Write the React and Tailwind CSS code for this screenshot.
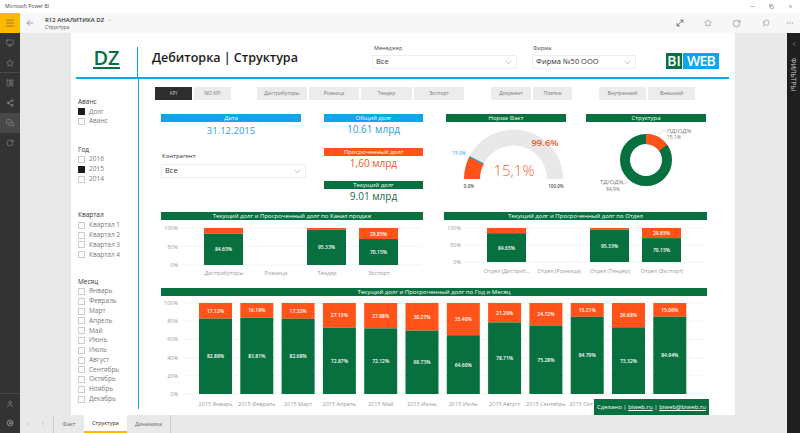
import { ArrowLeft, ChevronDown, ChevronLeft, ChevronRight, Cog, Copy, Ellipsis, LayoutPanelLeft, Menu, MessagesSquare, Minus, Monitor, MoveDiagonal, RotateCw, Search, Share2, Star, User, X } from 'lucide-react';

const BLUE = '#0aa7ea';
const GREEN = '#08703f';
const ORANGE = '#ff5319';

const kanal = [
  { x: 43, green: 84.65, label: 'Дистрибуторы', cx: 63, showOrange: false },
  { label: 'Розница', cx: 115 },
  { x: 146, green: 95.33, label: 'Тендер', cx: 166, showOrange: false },
  { x: 198, green: 70.15, label: 'Экспорт', cx: 218, showOrange: true },
];

const otdel = [
  { x: 43, green: 84.65, label: 'Отдел (Дистриб...', cx: 63, showOrange: false },
  { label: 'Отдел (Розница)', cx: 115 },
  { x: 146, green: 95.33, label: 'Отдел (Тендер)', cx: 166, showOrange: false },
  { x: 198, green: 70.15, label: 'Отдел (Экспорт)', cx: 218, showOrange: true },
];

const mesyacy = [
  ['Январь', 82.88, 17.12],
  ['Февраль', 83.81, 16.19],
  ['Март', 82.68, 17.32],
  ['Апрель', 72.87, 27.13],
  ['Май', 72.12, 27.88],
  ['Июнь', 69.73, 30.27],
  ['Июль', 64.6, 35.4],
  ['Август', 78.71, 21.29],
  ['Сентябрь', 75.28, 24.72],
  ['Окт', 84.79, 15.21],
  ['Ноябрь', 73.32, 26.68],
  ['Декабрь', 84.94, 15.06],
].map(([m, g, o], i) => ({
  x: 38 + i * 41.3,
  green: g,
  orange: o,
  label: `2015 ${m}`,
  // подписи двух последних месяцев закрыты плашкой, октябрь виден наполовину
  hideLabel: i > 9,
  cx: i === 9 ? 420 : 54.5 + i * 41.3,
  showOrange: true,
}));

const pct = (v) => `${v.toFixed(2)}%`;

function Header({ children, color = GREEN, className = '' }) {
  return (
    <div className={`h-2 flex items-center justify-center text-[6px] leading-none text-white ${className}`} style={{ backgroundColor: color }}>
      {children}
    </div>
  );
}

function Chart({ width, height, top, bottom, ticks, gridFrom, gridTo, barWidth, labelY, bars }) {
  const span = bottom - top;
  return (
    <svg width={width} height={height} className="block">
      {ticks.map((t) => {
        const y = bottom - (span * t) / 100;
        return (
          <g key={t}>
            <line x1={gridFrom} x2={gridTo} y1={y} y2={y} stroke="#efefef" strokeWidth="0.7" />
            <text x="17" y={y + 2} textAnchor="end" fontSize="5.5" fill="#999">{t}%</text>
          </g>
        );
      })}
      {bars.map((b) => {
        const orange = b.orange ?? 100 - b.green;
        return (
          <g key={b.label}>
            {b.x !== undefined && (
              <>
                <rect x={b.x} y={top} width={barWidth} height={(span * orange) / 100} fill={ORANGE} />
                <rect x={b.x} y={bottom - (span * b.green) / 100} width={barWidth} height={(span * b.green) / 100} fill={GREEN} />
                <text x={b.x + barWidth / 2} y={bottom - (span * b.green) / 200 + 2} textAnchor="middle" fontSize="5" fontWeight="600" fill="#fff">{pct(b.green)}</text>
                {b.showOrange && (
                  <text x={b.x + barWidth / 2} y={top + (span * orange) / 200 + 2} textAnchor="middle" fontSize="5" fontWeight="600" fill="#fff">{pct(orange)}</text>
                )}
              </>
            )}
            {!b.hideLabel && (
              <text x={b.cx} y={labelY} textAnchor="middle" fontSize="5.5" fill="#999">{b.label}</text>
            )}
          </g>
        );
      })}
    </svg>
  );
}

function Gauge() {
  const cx = 67.5;
  const cy = 57;
  const R = 49.5;
  const r = 33.5;
  const point = (rad, f) => {
    const a = Math.PI * (1 - f);
    return `${(cx + rad * Math.cos(a)).toFixed(2)} ${(cy - rad * Math.sin(a)).toFixed(2)}`;
  };
  const arc = (f) => `M${point(R, 0)} A${R} ${R} 0 0 1 ${point(R, f)} L${point(r, f)} A${r} ${r} 0 0 0 ${point(r, 0)} Z`;
  return (
    <svg width="120" height="72" className="block">
      <path d={arc(1)} fill="#e8e8e8" />
      <path d={arc(0.151)} fill={ORANGE} />
      <line
        x1={cx + r * Math.cos(Math.PI * 0.85)}
        y1={cy - r * Math.sin(Math.PI * 0.85)}
        x2={cx + R * Math.cos(Math.PI * 0.85)}
        y2={cy - R * Math.sin(Math.PI * 0.85)}
        stroke={BLUE}
        strokeWidth="1"
      />
      <text x="13" y="33" textAnchor="middle" fontSize="5" fill={BLUE}>15.0%</text>
      <text x="99" y="24" textAnchor="middle" fontSize="9.5" fontWeight="600" fill="#f4582a">99.6%</text>
      <text x="68" y="54" textAnchor="middle" fontSize="15" fontWeight="300" fill="#f0673c">15,1%</text>
      <text x="23" y="66" textAnchor="middle" fontSize="4.5" fontWeight="600" fill="#555">0.0%</text>
      <text x="110" y="66" textAnchor="middle" fontSize="4.5" fontWeight="600" fill="#555">100.0%</text>
    </svg>
  );
}

function Donut() {
  const cx = 60;
  const cy = 38;
  const R = 26;
  const r = 16;
  const a = 0.151 * 2 * Math.PI;
  const wedge = `M${cx} ${cy - R} A${R} ${R} 0 0 1 ${cx + R * Math.sin(a)} ${cy - R * Math.cos(a)} L${cx + r * Math.sin(a)} ${cy - r * Math.cos(a)} A${r} ${r} 0 0 0 ${cx} ${cy - r} Z`;
  return (
    <svg width="120" height="72" className="block">
      <circle cx={cx} cy={cy} r={(R + r) / 2} fill="none" stroke={GREEN} strokeWidth={R - r} />
      <path d={wedge} fill={ORANGE} />
      <path d="M72 13 L76 9 L80 9" fill="none" stroke="#bbb" strokeWidth="0.5" />
      <path d="M42 60 L38 62 L34 62" fill="none" stroke="#bbb" strokeWidth="0.5" />
      <text x="81" y="11" fontSize="6" fill="#777">ПД/ОД%</text>
      <text x="81" y="17" fontSize="5" fill="#777">15,1%</text>
      <text x="14" y="62" fontSize="6" fill="#777">ТД/ОД%</text>
      <text x="20" y="69" fontSize="5" fill="#777">84,9%</text>
    </svg>
  );
}

function Slicer({ title, items, checked, className = '' }) {
  return (
    <div className={className}>
      <div className="text-[6.5px] leading-[11px] text-[#333]">{title}</div>
      {items.map((item) => (
        <div key={item} className="flex items-center h-[9.8px] gap-[4px]">
          <span className={`w-[7px] h-[7px] border ${item === checked ? 'bg-[#1c1c1c] border-[#1c1c1c]' : 'border-[#ccc]'}`} />
          <span className="text-[6.5px] leading-none text-[#7a7a7a]">{item}</span>
        </div>
      ))}
    </div>
  );
}

function Dropdown({ value, className = '' }) {
  return (
    <div className={`h-[14px] border border-[#eee] flex items-center justify-between px-[3px] ${className}`}>
      <span className="text-[7.5px] leading-none text-[#333]">{value}</span>
      <ChevronDown size={9} strokeWidth={1} className="text-[#555]" />
    </div>
  );
}

function Btn({ children, active, w }) {
  return (
    <div
      className={`h-[13px] flex items-center justify-center text-[5px] leading-none ${active ? 'bg-[#2d2d2d] text-[#ccc]' : 'bg-[#ececec] text-[#777]'}`}
      style={{ width: w }}
    >
      {children}
    </div>
  );
}

function Kpi({ title, value, color, valueColor, className = '' }) {
  return (
    <div className={className}>
      <Header color={color}>{title}</Header>
      <div className="text-[10px] leading-[13px] text-center mt-[1px]" style={{ color: valueColor }}>{value}</div>
    </div>
  );
}

export default function App() {
  return (
    <div className="w-[800px] h-[433px] flex flex-col overflow-hidden bg-white font-['Open_Sans',sans-serif]">
      <div className="h-[13px] flex items-center justify-between pl-[5px] pr-[7px] text-[5px] text-[#444]">
        <span>Microsoft Power BI</span>
        <div className="flex items-center gap-[14px] text-[#555]">
          <Minus size={5} />
          <Copy size={5} />
          <X size={5} />
        </div>
      </div>

      <div className="flex-1 flex min-h-0">
        {/* Левая панель */}
        <div className="w-5 bg-[#333] flex flex-col text-[#bbb]">
          <div className="h-5 bg-[#fdb900] flex items-center justify-center text-[#555]">
            <Menu size={10} strokeWidth={1.5} />
          </div>
          <div className="h-5 flex items-center justify-center"><Monitor size={8} strokeWidth={1.2} /></div>
          <div className="h-5 flex items-center justify-center border-b border-[#4a4a4a]"><Star size={8} strokeWidth={1.2} /></div>
          <div className="h-5 flex items-center justify-center"><LayoutPanelLeft size={8} strokeWidth={1.2} /></div>
          <div className="h-5 flex items-center justify-center"><Share2 size={8} strokeWidth={1.2} /></div>
          <div className="h-5 flex items-center justify-center bg-[#484848]"><MessagesSquare size={8} strokeWidth={1.2} /></div>
          <div className="h-5 flex items-center justify-center"><RotateCw size={8} strokeWidth={1.2} /></div>
          <div className="mt-auto h-5 flex items-center justify-center border-t border-[#4a4a4a]"><User size={8} strokeWidth={1.2} /></div>
          <div className="h-5 flex items-center justify-center"><Cog size={8} strokeWidth={1.2} /></div>
        </div>

        <div className="flex-1 flex flex-col min-w-0">
          {/* Панель приложения */}
          <div className="h-5 bg-[#f7f7f7] flex items-center text-[#333]">
            <ArrowLeft size={10} strokeWidth={1} className="ml-[5px]" />
            <div className="ml-[10px] flex flex-col">
              <div className="flex items-center gap-[3px] text-[6px] leading-[8px] font-semibold text-[#333]">
                R12 АНАЛИТИКА DZ <ChevronDown size={5} className="text-[#777]" />
              </div>
              <div className="text-[5px] leading-[6px] text-[#555]">Структура</div>
            </div>
            <div className="ml-auto flex items-center pr-[6px]">
              <MoveDiagonal size={10} strokeWidth={1.3} className="text-[#222]" />
              <Star size={8} strokeWidth={1} className="ml-[19px]" />
              <RotateCw size={9} strokeWidth={1} className="ml-5" />
              <Search size={8} strokeWidth={1} className="ml-[21px] -scale-x-100" />
              <Ellipsis size={8} strokeWidth={1} className="ml-4 text-[#777]" />
            </div>
          </div>

          <div className="flex-1 flex min-h-0">
            <div className="flex-1 flex flex-col min-w-0 bg-[#e9e9e9]">
              <div className="h-[382px] pl-[51px]">
                {/* Отчёт */}
                <div className="relative w-[664px] h-[382px] bg-white flex flex-col">
                  <div className="h-[46px] ml-[5px] mr-[6px] flex border-b-2 border-[#0aa7ea]">
                    <div className="w-[62px] h-[30px] mt-[14px] border-r-[1.5px] border-[#0aa7ea] flex justify-center pt-[1px]">
                      <span className="text-[20px] leading-[20px] h-[21px] font-semibold text-[#08703f] border-b-2 border-[#08703f]">DZ</span>
                    </div>
                    <div className="w-[234px] pl-[14px] pt-[16px] text-[12.5px] leading-[18px] font-semibold text-[#1a1a1a] whitespace-nowrap">
                      Дебиторка | Структура
                    </div>
                    <div className="w-[145px] pt-[11px]">
                      <div className="text-[5.5px] leading-[8px] pl-[2px] text-[#444]">Менеджер</div>
                      <Dropdown value="Все" className="mt-[3px]" />
                    </div>
                    <div className="ml-[15px] w-[104px] pt-[11px]">
                      <div className="text-[5.5px] leading-[8px] pl-[1px] text-[#444]">Фирма</div>
                      <Dropdown value="Фирма №50 ООО" className="mt-[3px]" />
                    </div>
                    <div className="ml-[30px] mt-[20px] flex h-4 text-[14px] leading-4 font-semibold text-white">
                      <span className="w-4 bg-[#08703f] text-center">BI</span>
                      <span className="w-9 ml-px bg-[#0aa7ea] text-center tracking-tighter">WEB</span>
                    </div>
                  </div>

                  <div className="flex-1 flex min-h-0">
                    {/* Фильтры */}
                    <div className="w-[68px] h-[330px] pl-[7px] pt-[17px] border-r-[1.5px] border-[#0aa7ea]">
                      <Slicer title="Аванс" items={['Долг', 'Аванс']} checked="Долг" />
                      <Slicer title="Год" items={['2016', '2015', '2014']} checked="2015" className="mt-[17px]" />
                      <Slicer title="Квартал" items={['Квартал 1', 'Квартал 2', 'Квартал 3', 'Квартал 4']} className="mt-[25.5px]" />
                      <Slicer title="Месяц" items={['Январь', 'Февраль', 'Март', 'Апрель', 'Май', 'Июнь', 'Июль', 'Август', 'Сентябрь', 'Октябрь', 'Ноябрь', 'Декабрь']} className="mt-[16px]" />
                    </div>

                    <div className="flex-1 min-w-0">
                      {/* Кнопки */}
                      <div className="flex mt-2 ml-4">
                        <div className="flex gap-[2px]">
                          <Btn active w={37}>KPI</Btn>
                          <Btn w={37}>NO KPI</Btn>
                        </div>
                        <div className="flex gap-[2px] ml-[26px]">
                          <Btn w={50}>Дистрибуторы</Btn>
                          <Btn w={50}>Розница</Btn>
                          <Btn w={51}>Тендер</Btn>
                          <Btn w={50}>Экспорт</Btn>
                        </div>
                        <div className="flex gap-[2px] ml-[27px]">
                          <Btn w={40}>Документ</Btn>
                          <Btn w={39}>Платеж</Btn>
                        </div>
                        <div className="flex gap-[2px] ml-[27px]">
                          <Btn w={47}>Внутренний</Btn>
                          <Btn w={47}>Внешний</Btn>
                        </div>
                      </div>

                      {/* Показатели */}
                      <div className="flex mt-[14px] ml-[22px] h-[98px]">
                        <div className="w-[145px]">
                          <Header color={BLUE} className="w-[140px]">Дата</Header>
                          <div className="w-[140px] text-[9.5px] leading-[13px] mt-[2px] text-center text-[#1f9fdc]">31.12.2015</div>
                          <div className="text-[6px] leading-[8px] mt-[15px] pl-[1px] text-[#333]">Контрагент</div>
                          <Dropdown value="Все" className="mt-[4px]" />
                        </div>
                        <div className="w-[99px] ml-[18px]">
                          <Kpi title="Общий долг" value="10.61 млрд" color={BLUE} valueColor="#1f9fdc" />
                          <Kpi title="Просроченный долг" value="1,60 млрд" color={ORANGE} valueColor="#f0582a" className="mt-[12px]" />
                          <Kpi title="Текущий долг" value="9.01 млрд" color={GREEN} valueColor="#18693f" className="mt-[11px]" />
                        </div>
                        <div className="w-[120px] ml-[23px]">
                          <Header>Норма Факт</Header>
                          <Gauge />
                        </div>
                        <div className="w-[120px] ml-5">
                          <Header>Структура</Header>
                          <Donut />
                        </div>
                      </div>

                      {/* Графики */}
                      <div className="flex ml-[22px]">
                        <div className="w-[262px]">
                          <Header>Текущий долг и Просроченный долг по Канал продаж</Header>
                          <Chart width={262} height={68} top={8} bottom={45} ticks={[100, 50, 0]} gridFrom={20} gridTo={260} barWidth={39} labelY={55} bars={kanal} />
                        </div>
                        <div className="w-[263px] ml-[21px]">
                          <Header>Текущий долг и Просроченный долг по Отдел</Header>
                          <Chart width={263} height={68} top={8} bottom={42} ticks={[100, 50, 0]} gridFrom={20} gridTo={260} barWidth={39} labelY={53} bars={otdel} />
                        </div>
                      </div>

                      <div className="ml-[22px] w-[546px]">
                        <Header>Текущий долг и Просроченный долг по Год и Месяц</Header>
                        <Chart width={546} height={118} top={7} bottom={98} ticks={[100, 80, 60, 40, 20, 0]} gridFrom={22} gridTo={543} barWidth={33} labelY={110} bars={mesyacy} />
                      </div>
                    </div>
                  </div>

                  <div className="absolute right-[26px] bottom-0 w-[115px] h-4 bg-[#08703f] flex items-center justify-center text-[6px] leading-none text-white whitespace-nowrap">
                    Сделано |&nbsp;<span className="underline">biweb.ru</span>&nbsp;|&nbsp;<span className="underline">biweb@biweb.ru</span>
                  </div>
                </div>
              </div>

              {/* Вкладки */}
              <div className="flex-1 flex items-stretch text-[5.5px] text-[#666]">
                <div className="w-[34px] flex items-center gap-[9px] pl-[5px] text-[#aaa] border-r border-[#ccc]">
                  <ChevronLeft size={6} />
                  <ChevronRight size={6} />
                </div>
                <div className="w-[30px] flex items-center justify-center">Факт</div>
                <div className="w-[43px] flex items-center justify-center bg-white border-b-2 border-[#fdb900] text-[#222]">Структура</div>
                <div className="w-[44px] flex items-center justify-center border-r border-[#ccc]">Динамика</div>
              </div>
            </div>

            {/* Панель фильтров */}
            <div className="w-[13px] bg-[#1f1f1f] flex flex-col items-center text-[#ccc]">
              <ChevronLeft size={6} className="mt-[8px]" />
              <span className="mt-[11px] text-[7px] leading-none [writing-mode:vertical-rl] tracking-tight">ФИЛЬТРЫ</span>
            </div>
          </div>
        </div>
      </div>
    </div>
  );
}
